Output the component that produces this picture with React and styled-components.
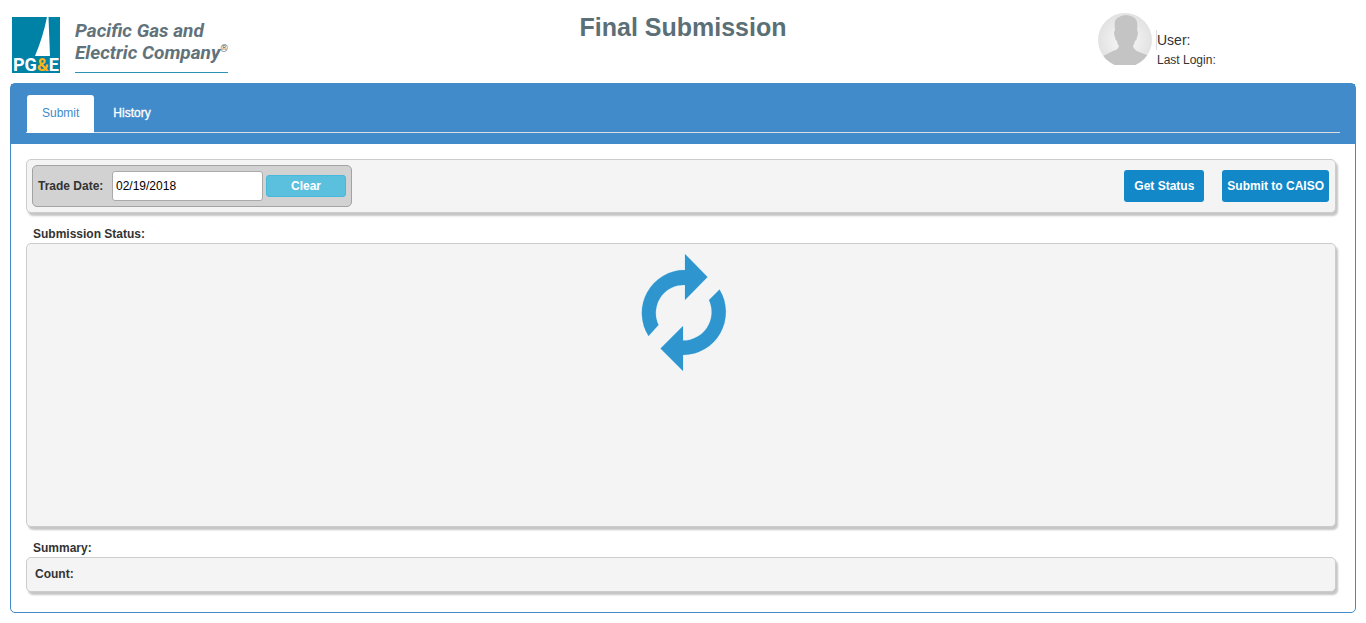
import React, { useState } from "react";
import styled, { createGlobalStyle } from "styled-components";

const GlobalStyle = createGlobalStyle`
  * { box-sizing: border-box; }
  body {
    margin: 0;
    background: #fff;
    color: #333;
    font: 12px/18px "Liberation Sans", Arial, sans-serif;
  }
  button, input { font-family: inherit; font-size: 12px; }
`;

const Header = styled.header`
  display: grid;
  grid-template-columns: 1fr auto 1fr;
  align-items: start;
  padding: 12px 10px 9px;
`;

const Brand = styled.a`
  display: flex;
  gap: 14px;
  padding: 5px 0 0 2px;
  color: #62727a;
  text-decoration: none;
`;

const BrandName = styled.span`
  align-self: flex-start;
  margin-top: 3px;
  padding-bottom: 8px;
  border-bottom: 1px solid #2d93b5;
  font: italic bold 19px/22px Roboto, "Liberation Sans", sans-serif;
  white-space: nowrap;
`;

const Registered = styled.sup`
  font-size: 10px;
  line-height: 1px;
`;

const Title = styled.h1`
  margin: 0;
  color: #5b6f77;
  font-size: 25px;
  line-height: 30px;
`;

const UserPanel = styled.div`
  display: flex;
  justify-self: end;
  width: 258px;
  padding-top: 1px;
  gap: 4px;
`;

const UserLines = styled.div`
  padding-top: 17px;
`;

const UserName = styled.div`
  border-left: 1px solid #ddd;
  font-size: 14px;
  line-height: 20px;
`;

const LastLogin = styled.div`
  padding-left: 1px;
  line-height: 20px;
`;

const Card = styled.main`
  margin: 0 10px 10px;
  border: 1px solid #428bca;
  border-radius: 5px;
`;

const CardHeading = styled.div`
  padding: 11px 15px;
  background: #428bca;
`;

const Tabs = styled.nav`
  display: flex;
  gap: 4px;
  border-bottom: 1px solid #ddd;
  padding-left: 1px;
`;

const Tab = styled.button`
  height: 38px;
  margin-bottom: -1px;
  padding: 0 15px 2px;
  border: 0;
  border-radius: 3px 3px 0 0;
  background: ${(p) => (p.$active ? "#fff" : "transparent")};
  color: ${(p) => (p.$active ? "#428bca" : "#fff")};
  -webkit-text-stroke: ${(p) => (p.$active ? "0" : "0.3px #fff")};
  cursor: pointer;
`;

const CardBody = styled.div`
  padding: 15px 19px 20px 15px;
`;

const Panel = styled.div`
  border: 1px solid #ccc;
  border-radius: 5px;
  background: #f4f4f4;
  box-shadow: 2px 3px 2px #c6c6c6;
`;

const Toolbar = styled(Panel)`
  display: flex;
  align-items: center;
  justify-content: space-between;
  padding: 5px 6px 5px 5px;
`;

const DateGroup = styled.div`
  display: flex;
  align-items: center;
  padding: 5px;
  border: 1px solid #a3a3a3;
  border-radius: 5px;
  background: #d2d2d2;
`;

const DateLabel = styled.label`
  width: 74px;
  font-weight: bold;
`;

const DateInput = styled.input`
  width: 151px;
  height: 30px;
  margin-right: 3px;
  padding: 0 3px;
  border: 1px solid #aaa;
  border-radius: 3px;
  background: #fff;
  color: #000;
`;

const ClearButton = styled.button`
  width: 80px;
  height: 22px;
  padding: 0;
  border: 1px solid #46b8da;
  border-radius: 3px;
  background: #5bc0de;
  color: #fff;
  font-weight: bold;
`;

const Actions = styled.div`
  display: flex;
  gap: 18px;
`;

const ActionButton = styled.button`
  min-width: 80px;
  height: 32px;
  padding: 0 5px;
  border: 0;
  border-radius: 3px;
  background: #1288c9;
  color: #fff;
  font-weight: bold;
  white-space: nowrap;
`;

const SectionTitle = styled.h2`
  margin: 12px 0 0 7px;
  font-size: 12px;
  line-height: 18px;
`;

const StatusPanel = styled(Panel)`
  display: flex;
  justify-content: center;
  align-items: flex-start;
  min-height: 284px;
  padding: 10px 0 10px 6px;
`;

const SummaryPanel = styled(Panel)`
  padding: 7px 8px 8px;
  font-weight: bold;
`;

const LogoMark = () => (
  <svg width="49" height="57" viewBox="0 0 49 57" aria-hidden="true">
    <path d="M0 0H48V56H0Z" fill="#0081a6" />
    <path d="M35 0H36.500L38 39H23Q31 20 35 0Z" fill="#fff" />
    <text x="1" y="54" fill="#fff" fontFamily="Roboto, Liberation Sans, sans-serif" fontSize="18" fontWeight="bold">
      PG<tspan fill="#fdb515">&amp;</tspan>E
    </text>
  </svg>
);

const Avatar = () => (
  <svg width="54" height="52" viewBox="0 0 54 52" role="img" aria-label="User avatar">
    <defs>
      <radialGradient id="avatarShade">
        <stop offset="0" stopColor="#fafafa" />
        <stop offset="1" stopColor="#e2e2e2" />
      </radialGradient>
      <clipPath id="avatarClip"><circle cx="27" cy="27" r="27" /></clipPath>
    </defs>
    <g clipPath="url(#avatarClip)">
      <rect width="54" height="54" fill="url(#avatarShade)" />
      <path
        fill="#c4c4c4"
        d="M17 17C16 9 17 6 21 4Q28 0 35 4C39 6 40 10 39 17Q41 20 39 24Q39 27 37 28Q36 32 35 33Q36 37 41 39L49 42L54 54H0L5 43L15 38Q20 37 21 33Q19 31 19 28Q17 27 17 24Q15 20 17 17Z"
      />
    </g>
  </svg>
);

const LoadingArrows = () => (
  <svg width="88" height="118" viewBox="0 0 88 118" role="img" aria-label="Loading">
    <g fill="#2f95cf" stroke="#c9ebf8" strokeWidth="1" paintOrder="stroke">
      <path d="M45 0L67.500 23L45 46V31A28 28 0 0 0 18.500 71L8.500 82A43 43 0 0 1 45 16Z" />
      <path d="M43 117L20.500 94.500L43 72V86.500A28.500 28.500 0 0 0 69 46L79.500 35.500A43 43 0 0 1 43 101Z" />
    </g>
  </svg>
);

export default function App() {
  const [tab, setTab] = useState("Submit");
  const [date, setDate] = useState("02/19/2018");

  return (
    <>
      <GlobalStyle />
      <Header>
        <Brand href="#">
          <LogoMark />
          <BrandName>
            Pacific Gas and
            <br />
            Electric Company<Registered>®</Registered>
          </BrandName>
        </Brand>
        <Title>Final Submission</Title>
        <UserPanel>
          <Avatar />
          <UserLines>
            <UserName>User:</UserName>
            <LastLogin>Last Login:</LastLogin>
          </UserLines>
        </UserPanel>
      </Header>
      <Card>
        <CardHeading>
          <Tabs>
            {["Submit", "History"].map((name) => (
              <Tab key={name} type="button" $active={tab === name} onClick={() => setTab(name)}>
                {name}
              </Tab>
            ))}
          </Tabs>
        </CardHeading>
        <CardBody>
          <Toolbar>
            <DateGroup>
              <DateLabel htmlFor="trade-date">Trade Date:</DateLabel>
              <DateInput id="trade-date" value={date} onChange={(e) => setDate(e.target.value)} />
              <ClearButton type="button" onClick={() => setDate("")}>Clear</ClearButton>
            </DateGroup>
            <Actions>
              <ActionButton type="button">Get Status</ActionButton>
              <ActionButton type="button">Submit to CAISO</ActionButton>
            </Actions>
          </Toolbar>
          <SectionTitle>Submission Status:</SectionTitle>
          <StatusPanel>
            <LoadingArrows />
          </StatusPanel>
          <SectionTitle>Summary:</SectionTitle>
          <SummaryPanel>Count:</SummaryPanel>
        </CardBody>
      </Card>
    </>
  );
}
